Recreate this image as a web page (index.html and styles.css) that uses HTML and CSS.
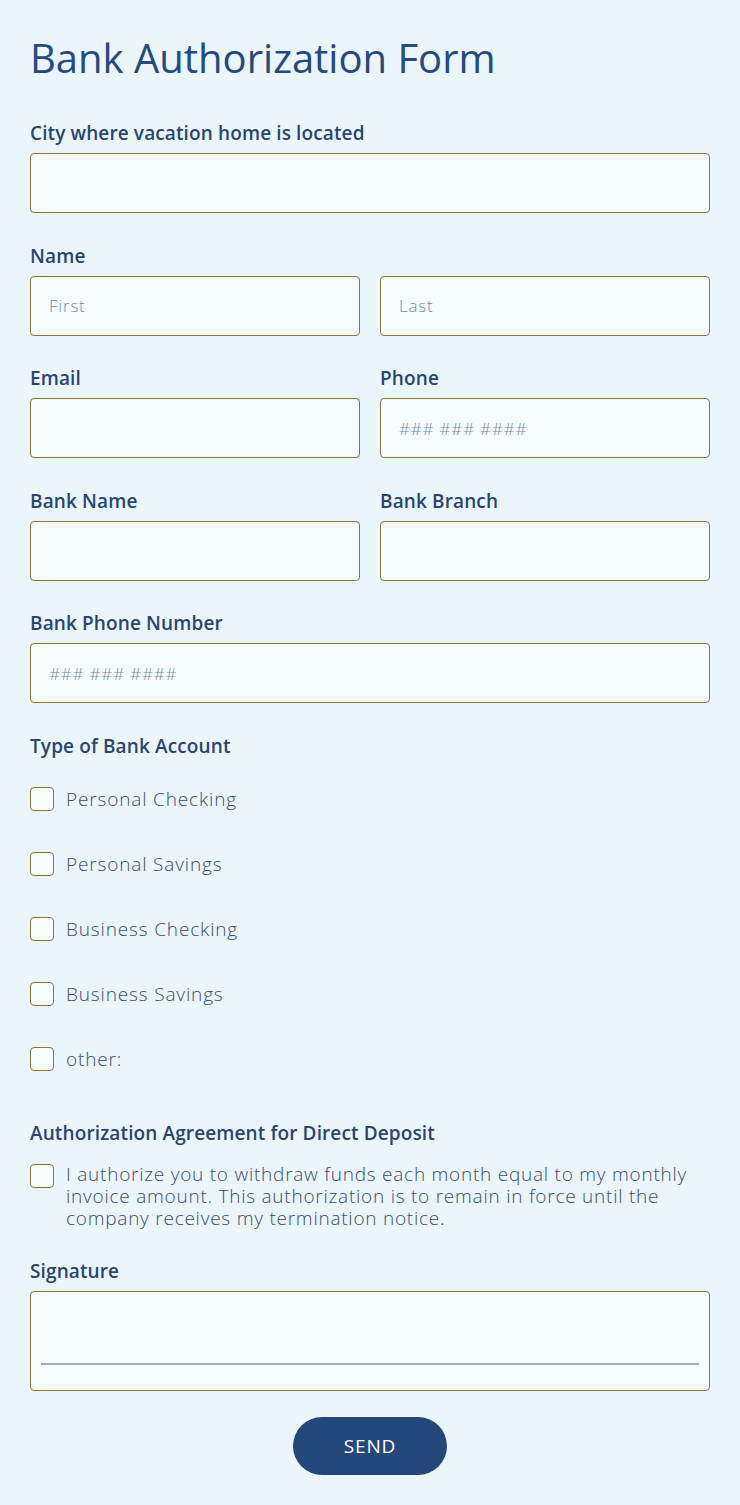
FILE: index.html
```html
<!DOCTYPE html>
<html lang="en">
<head>
<meta charset="utf-8">
<title>Bank Authorization Form</title>
<link rel="stylesheet" href="styles.css">
</head>
<body>
<form class="form">
  <h1 class="title">Bank Authorization Form</h1>

  <div class="field">
    <label class="label">City where vacation home is located</label>
    <input class="input" type="text">
  </div>

  <div class="field">
    <label class="label">Name</label>
    <div class="row">
      <input class="input" type="text" placeholder="First">
      <input class="input" type="text" placeholder="Last">
    </div>
  </div>

  <div class="row field">
    <div class="col">
      <label class="label">Email</label>
      <input class="input" type="text">
    </div>
    <div class="col">
      <label class="label">Phone</label>
      <input class="input" type="text" placeholder="### ### ####">
    </div>
  </div>

  <div class="row field">
    <div class="col">
      <label class="label">Bank Name</label>
      <input class="input" type="text">
    </div>
    <div class="col">
      <label class="label">Bank Branch</label>
      <input class="input" type="text">
    </div>
  </div>

  <div class="field">
    <label class="label">Bank Phone Number</label>
    <input class="input" type="text" placeholder="### ### ####">
  </div>

  <div class="group">
    <div class="label">Type of Bank Account</div>
    <div class="options">
      <label class="option"><span class="box"></span><span class="opt-text">Personal Checking</span></label>
      <label class="option"><span class="box"></span><span class="opt-text">Personal Savings</span></label>
      <label class="option"><span class="box"></span><span class="opt-text">Business Checking</span></label>
      <label class="option"><span class="box"></span><span class="opt-text">Business Savings</span></label>
      <label class="option"><span class="box"></span><span class="opt-text">other:</span></label>
    </div>
  </div>

  <div class="group agree">
    <div class="label">Authorization Agreement for Direct Deposit</div>
    <label class="option multi"><span class="box"></span><span class="opt-text">I authorize you to withdraw funds each month equal to my monthly invoice amount. This authorization is to remain in force until the company receives my termination notice.</span></label>
  </div>

  <div class="group sig">
    <div class="label">Signature</div>
    <div class="sigbox"><div class="sigline"></div></div>
  </div>

  <div class="actions">
    <button class="send" type="button">SEND</button>
  </div>
</form>
</body>
</html>
```

FILE: styles.css
```css
* { box-sizing: border-box; }
html, body { margin: 0; padding: 0; }
body {
  background: #eaf5fc;
  font-family: "Open Sans", "Noto Sans", sans-serif;
  color: #253f6a;
  width: 740px;
  height: 1505px;
}
.form {
  padding: 32px 30px 0;
  display: flex;
  flex-direction: column;
}
.title {
  margin: 0 0 37px;
  font-family: "Open Sans", sans-serif;
  font-weight: 400;
  font-size: 40px;
  line-height: 52px;
  color: #254a7e;
  letter-spacing: 0;
}
.field { margin-bottom: 30.5px; }
.row {
  display: flex;
  gap: 20px;
}
.row > .input, .col { flex: 1; min-width: 0; }
.label {
  display: block;
  font-size: 19px;
  line-height: 24px;
  font-weight: 600;
  color: #2a456f;
  margin-bottom: 8px;
  letter-spacing: 0.12px;
}
.input {
  display: block;
  width: 100%;
  height: 60px;
  margin: 0;
  border: 1px solid #8e7240;
  border-radius: 4px;
  background: #f6fbfe;
  padding: 0 18px;
  font-family: "Open Sans", sans-serif;
  font-size: 17px;
  letter-spacing: 0.8px;
  color: #253f6a;
  outline: none;
}
.input::placeholder { color: #7b8aa8; font-weight: 300; }
.group .label { margin-bottom: 29px; }
.options {
  display: flex;
  flex-direction: column;
  gap: 41px;
}
.option {
  display: flex;
  align-items: center;
  gap: 12px;
  height: 24px;
}
.box {
  flex: none;
  width: 24px;
  height: 24px;
  border: 1px solid #8e7240;
  border-radius: 4px;
  background: #f6fbfe;
}
.opt-text {
  font-size: 19px;
  font-weight: 300;
  letter-spacing: 0.85px;
  color: #3a4e6e;
  line-height: 24px;
}
.agree { margin-top: 50px; }
.agree .label { margin-bottom: 19px; }
.option.multi {
  height: auto;
  align-items: flex-start;
}
.option.multi .opt-text {
  font-size: 19px;
  letter-spacing: 0.76px;
  line-height: 22px;
  margin-top: -1px;
}
.sig { margin-top: 30px; }
.sig .label { margin-bottom: 8px; }
.sigbox {
  height: 100px;
  border: 1px solid #8e7240;
  border-radius: 4px;
  background: #f6fbfe;
  padding: 71px 10px 0;
}
.sigline {
  height: 2px;
  background: #a8acb2;
}
.actions {
  display: flex;
  justify-content: center;
  margin-top: 26px;
}
.send {
  width: 154px;
  height: 58px;
  border: none;
  border-radius: 29px;
  background: #24487a;
  color: #ffffff;
  font-family: "Open Sans", sans-serif;
  font-size: 19px;
  letter-spacing: 0.8px;
  font-weight: 400;
  cursor: pointer;
}
```
